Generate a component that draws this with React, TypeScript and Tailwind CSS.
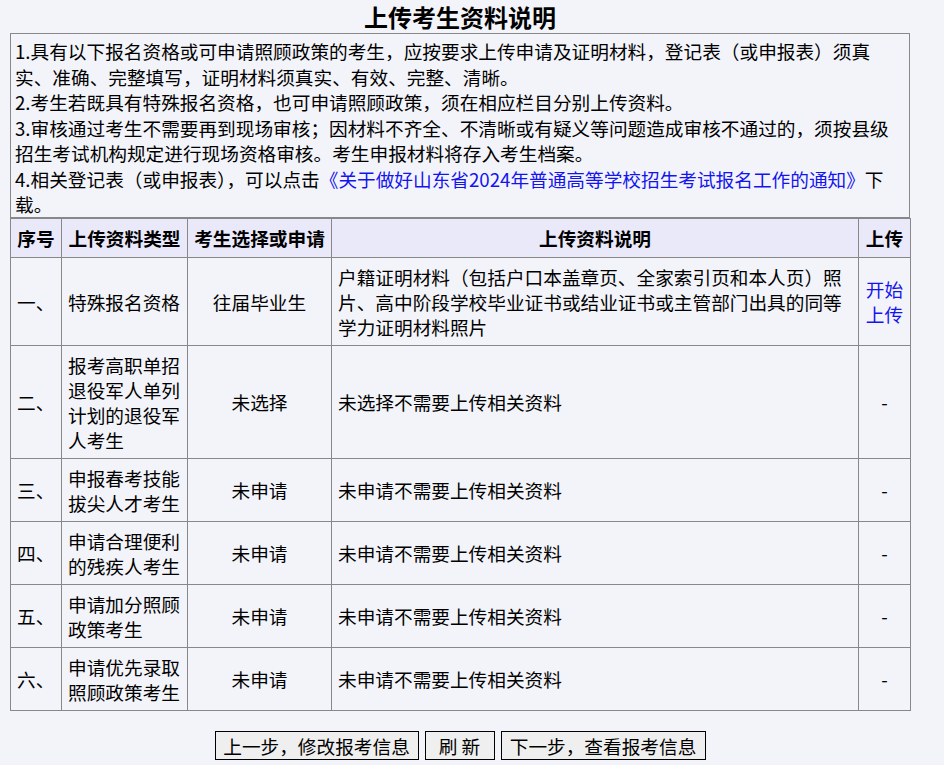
import React from "react";

const rows = [
  {
    no: "一、",
    type: "特殊报名资格",
    choice: "往届毕业生",
    desc: "户籍证明材料（包括户口本盖章页、全家索引页和本人页）照片、高中阶段学校毕业证书或结业证书或主管部门出具的同等学力证明材料照片",
    upload: "link",
  },
  { no: "二、", type: "报考高职单招退役军人单列计划的退役军人考生", choice: "未选择", desc: "未选择不需要上传相关资料", upload: "-" },
  { no: "三、", type: "申报春考技能拔尖人才考生", choice: "未申请", desc: "未申请不需要上传相关资料", upload: "-" },
  { no: "四、", type: "申请合理便利的残疾人考生", choice: "未申请", desc: "未申请不需要上传相关资料", upload: "-" },
  { no: "五、", type: "申请加分照顾政策考生", choice: "未申请", desc: "未申请不需要上传相关资料", upload: "-" },
  { no: "六、", type: "申请优先录取照顾政策考生", choice: "未申请", desc: "未申请不需要上传相关资料", upload: "-" },
];

export default function App() {
  return (
    <div
      className="min-h-[765px] w-full bg-[#f3f4fa] text-black"
      style={{ fontFamily: '"Noto Sans CJK SC", "Noto Sans", sans-serif' }}
    >
      <div className="ml-[10px] w-[900px]">
        <div className="h-[33px] text-center text-[24px] font-bold leading-[33px]">上传考生资料说明</div>
        <div className="border border-[#888] pl-[4px] pr-[4px] pt-[4px] text-[18.67px] leading-[25.5px]">
          <div>1.具有以下报名资格或可申请照顾政策的考生，应按要求上传申请及证明材料，登记表（或申报表）须真实、准确、完整填写，证明材料须真实、有效、完整、清晰。</div>
          <div>2.考生若既具有特殊报名资格，也可申请照顾政策，须在相应栏目分别上传资料。</div>
          <div>3.审核通过考生不需要再到现场审核；因材料不齐全、不清晰或有疑义等问题造成审核不通过的，须按县级招生考试机构规定进行现场资格审核。考生申报材料将存入考生档案。</div>
          <div>
            4.相关登记表（或申报表），可以点击
            <a className="text-[#1414ee]" href="#">《关于做好山东省2024年普通高等学校招生考试报名工作的通知》</a>
            下载。
          </div>
        </div>
        <table className="w-[900px] table-fixed border-collapse border border-[#888] text-[18.67px] leading-[25px]">
          <colgroup>
            <col className="w-[51px]" />
            <col className="w-[126px]" />
            <col className="w-[144px]" />
            <col className="w-[527px]" />
            <col className="w-[52px]" />
          </colgroup>
          <thead>
            <tr className="bg-[#e9e9fa] font-bold">
              <th className="border border-[#888] px-[6px] py-[6.5px] text-center">序号</th>
              <th className="border border-[#888] px-[6px] py-[6.5px] text-center">上传资料类型</th>
              <th className="border border-[#888] px-[6px] py-[6.5px] text-center">考生选择或申请</th>
              <th className="border border-[#888] px-[6px] py-[6.5px] text-center">上传资料说明</th>
              <th className="border border-[#888] px-[6px] py-[6.5px] text-center">上传</th>
            </tr>
          </thead>
          <tbody>
            {rows.map((r) => (
              <tr key={r.no}>
                <td className="border border-[#888] px-[6px] py-[6px] text-left">{r.no}</td>
                <td className="border border-[#888] px-[6px] py-[6px] text-left">{r.type}</td>
                <td className="border border-[#888] px-[6px] py-[6px] text-center">{r.choice}</td>
                <td className="border border-[#888] px-[6px] py-[6px] text-left">{r.desc}</td>
                <td className="border border-[#888] px-[6px] py-[6px] text-center">
                  {r.upload === "link" ? (
                    <a className="text-[#1414ee]" href="#">开始上传</a>
                  ) : (
                    "-"
                  )}
                </td>
              </tr>
            ))}
          </tbody>
        </table>
        <div className="mt-[20px] flex justify-center gap-[6px]">
          <button className="h-[29px] w-[204px] border border-black bg-[#efefef] text-[18.67px] leading-[25px]">上一步，修改报考信息</button>
          <button className="h-[29px] w-[70px] border border-black bg-[#efefef] text-[18.67px] leading-[25px]">刷 新</button>
          <button className="h-[29px] w-[205px] border border-black bg-[#efefef] text-[18.67px] leading-[25px]">下一步，查看报考信息</button>
        </div>
      </div>
    </div>
  );
}
